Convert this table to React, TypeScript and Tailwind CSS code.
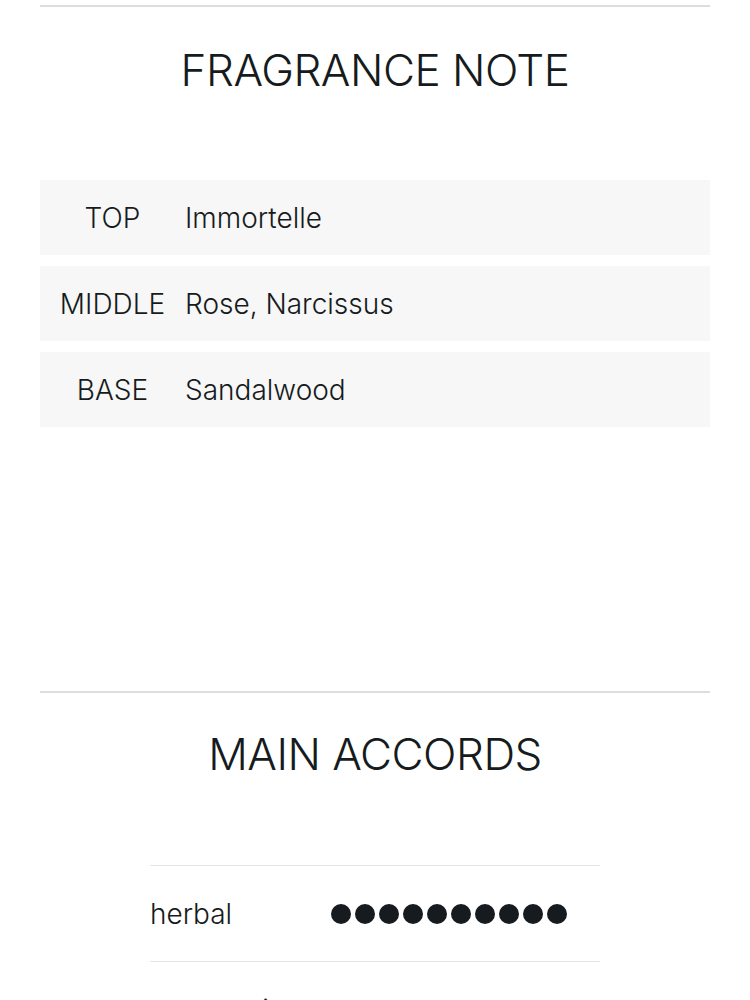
const notes = [
  { label: "TOP", value: "Immortelle" },
  { label: "MIDDLE", value: "Rose, Narcissus" },
  { label: "BASE", value: "Sandalwood" },
];

const accords = [
  { name: "herbal", score: 10 },
  { name: "warm spicy", score: 9 },
];

export default function App() {
  return (
    <div className="min-h-screen bg-white px-[40px] pt-[5px] font-['Inter',sans-serif] text-[#161b20]">
      {/* Fragrance note */}
      <section className="border-t-2 border-[#dddddd]">
        <h2 className="mt-[37px] text-center text-[44px] font-light leading-[53px] tracking-[-0.5px]">
          FRAGRANCE NOTE
        </h2>
        <div className="mt-[83px] flex flex-col gap-[11px]">
          {notes.map((n) => (
            <div key={n.label} className="flex h-[75px] items-center bg-[#f7f7f7]">
              <div className="w-[145px] text-center text-[28px] font-light">{n.label}</div>
              <div className="text-[28px] font-light">{n.value}</div>
            </div>
          ))}
        </div>
      </section>

      {/* Main accords */}
      <section className="mt-[264px] border-t-2 border-[#dddddd]">
        <h2 className="mt-[35px] text-center text-[44px] font-light leading-[53px] tracking-[-0.5px]">
          MAIN ACCORDS
        </h2>
        <div className="mx-auto mt-[84px] w-[450px] border-t border-[#e5e5e5]">
          {accords.map((a) => (
            <div key={a.name} className="flex h-[96px] items-center border-b border-[#e5e5e5]">
              <div className="w-[181px] text-[28px] font-light">{a.name}</div>
              <div className="flex gap-[4px]">
                {Array.from({ length: a.score }).map((_, i) => (
                  <span key={i} className="h-[20px] w-[20px] rounded-full bg-[#161b20]" />
                ))}
              </div>
            </div>
          ))}
        </div>
      </section>
    </div>
  );
}
